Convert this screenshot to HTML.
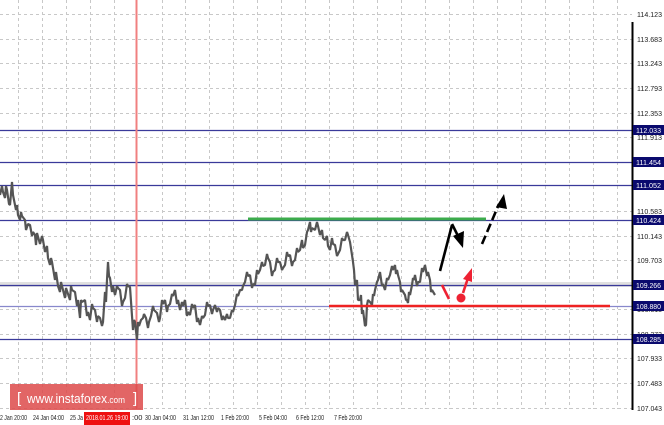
<!DOCTYPE html>
<html><head><meta charset="utf-8"><style>
html,body{margin:0;padding:0;background:#fff;width:664px;height:425px;overflow:hidden;font-family:"Liberation Sans",sans-serif}
</style></head><body>
<svg width="664" height="425" viewBox="0 0 664 425" xmlns="http://www.w3.org/2000/svg" font-family="Liberation Sans, sans-serif">
<rect width="664" height="425" fill="#fff"/>
<g stroke="#c8c8c8" stroke-width="1" stroke-dasharray="3,3">
<line x1="0" y1="14.5" x2="632" y2="14.5"/><line x1="0" y1="39.5" x2="632" y2="39.5"/><line x1="0" y1="63.5" x2="632" y2="63.5"/><line x1="0" y1="88.5" x2="632" y2="88.5"/><line x1="0" y1="113.5" x2="632" y2="113.5"/><line x1="0" y1="137.5" x2="632" y2="137.5"/><line x1="0" y1="211.5" x2="632" y2="211.5"/><line x1="0" y1="236.5" x2="632" y2="236.5"/><line x1="0" y1="260.5" x2="632" y2="260.5"/><line x1="0" y1="309.5" x2="632" y2="309.5"/><line x1="0" y1="334.5" x2="632" y2="334.5"/><line x1="0" y1="358.5" x2="632" y2="358.5"/><line x1="0" y1="383.5" x2="632" y2="383.5"/><line x1="0" y1="408.5" x2="632" y2="408.5"/>
<line x1="18.5" y1="0" x2="18.5" y2="409"/><line x1="42.5" y1="0" x2="42.5" y2="409"/><line x1="66.5" y1="0" x2="66.5" y2="409"/><line x1="90.5" y1="0" x2="90.5" y2="409"/><line x1="114.5" y1="0" x2="114.5" y2="409"/><line x1="162.5" y1="0" x2="162.5" y2="409"/><line x1="185.5" y1="0" x2="185.5" y2="409"/><line x1="209.5" y1="0" x2="209.5" y2="409"/><line x1="233.5" y1="0" x2="233.5" y2="409"/><line x1="257.5" y1="0" x2="257.5" y2="409"/><line x1="281.5" y1="0" x2="281.5" y2="409"/><line x1="305.5" y1="0" x2="305.5" y2="409"/><line x1="329.5" y1="0" x2="329.5" y2="409"/><line x1="353.5" y1="0" x2="353.5" y2="409"/><line x1="377.5" y1="0" x2="377.5" y2="409"/><line x1="401.5" y1="0" x2="401.5" y2="409"/><line x1="425.5" y1="0" x2="425.5" y2="409"/><line x1="449.5" y1="0" x2="449.5" y2="409"/><line x1="473.5" y1="0" x2="473.5" y2="409"/><line x1="497.5" y1="0" x2="497.5" y2="409"/><line x1="521.5" y1="0" x2="521.5" y2="409"/><line x1="545.5" y1="0" x2="545.5" y2="409"/><line x1="569.5" y1="0" x2="569.5" y2="409"/><line x1="593.5" y1="0" x2="593.5" y2="409"/><line x1="617.5" y1="0" x2="617.5" y2="409"/>
</g>
<rect x="0" y="282" width="632" height="5" fill="#e0e0e0"/>
<g stroke="#3a3a9a" stroke-width="1.3">
<line x1="0" y1="130.5" x2="632" y2="130.5"/><line x1="0" y1="162.5" x2="632" y2="162.5"/><line x1="0" y1="185.5" x2="632" y2="185.5"/><line x1="0" y1="220.5" x2="632" y2="220.5"/><line x1="0" y1="285.5" x2="632" y2="285.5"/><line x1="0" y1="306.5" x2="632" y2="306.5" stroke="#8888cc"/><line x1="0" y1="339.5" x2="632" y2="339.5"/>
</g>
<line x1="136.5" y1="0" x2="136.5" y2="409" stroke="#f08080" stroke-width="2"/>
<polyline fill="none" stroke="#555" stroke-width="2.2" stroke-linejoin="bevel" points="0,195 2,186 3,192 5,198 6,186 7,190 9,204 10,205 12,182 13,195 14,200 16,210 17,205 18,215 20,220 21,212 22,216 25,220 26,230 28,224 30,225 32,236 33,232 35,235 36,245 37,233 40,244 42,236 43,240 45,252 47,246 48,258 50,265 51,258 52,262 55,280 56,272 58,286 60,292 61,282 62,286 65,298 66,288 68,294 70,300 71,286 72,290 75,292 77,306 78,300 80,318 81,300 82,302 85,300 87,316 88,312 90,320 92,304 93,308 95,310 97,322 98,316 100,318 102,326 103,322 105,292 106,302 107,280 108,262 109,276 110,278 112,292 113,286 115,295 117,286 118,288 120,290 122,306 123,302 125,298 127,284 128,286 130,287 132,316 133,330 134,320 135,322 137,340 138,322 139,326 141,320 143,318 144,314 146,318 148,328 149,322 151,316 153,306 154,310 157,313 159,322 160,318 162,300 163,304 165,300 167,312 168,306 170,304 172,294 173,296 175,290 177,304 178,300 180,310 182,302 183,306 185,300 187,316 188,312 190,315 192,304 193,308 195,305 197,322 198,318 200,325 202,316 203,318 205,315 207,302 208,306 210,305 212,314 213,310 215,305 217,312 218,308 220,310 222,320 223,316 225,320 227,314 228,318 230,318 232,310 233,312 235,305 237,294 238,296 240,290 242,290 243,286 245,282 247,272 248,276 250,275 252,288 253,284 255,285 257,270 258,274 260,270 262,262 263,266 265,265 267,254 268,258 270,262 272,276 273,272 275,270 277,258 278,262 280,262 282,270 283,268 285,265 287,252 288,256 290,255 292,266 293,262 295,260 297,248 298,252 300,250 302,240 303,248 305,245 307,232 308,230 310,222 311,232 312,228 315,230 317,222 318,226 320,235 322,230 323,238 325,240 327,236 328,246 330,250 332,238 333,244 335,245 337,256 338,254 340,250 342,238 343,240 345,240 347,232 348,235 350,242 352,255 353,262 354,270 355,285 357,280 358,300 360,300 361,295 362,314 363,310 365,326 366,325 367,305 368,300 370,302 372,305 373,294 374,296 375,290 377,282 378,280 380,272 382,286 383,284 385,290 387,278 388,280 390,275 392,266 393,270 395,265 396,274 397,270 398,275 400,282 401,292 402,290 405,295 406,300 407,300 408,303 409,292 410,295 412,285 413,278 414,280 415,275 417,286 418,282 420,282 422,268 423,272 425,265 427,276 428,272 430,280 431,292 432,290 435,295"/>
<line x1="248" y1="219" x2="486" y2="219" stroke="#3cab4c" stroke-width="3"/>
<line x1="329" y1="306" x2="610" y2="306" stroke="#ee2222" stroke-width="2.5"/>
<g stroke="#000" stroke-width="2.6" fill="#000">
<line x1="440" y1="271" x2="452" y2="225"/>
<line x1="452" y1="224" x2="459" y2="238"/>
<polygon points="463,248 453,236 464,231" stroke="none"/>
<line x1="482" y1="244" x2="499" y2="204" stroke-dasharray="9,4"/>
<polygon points="504,194 496,207 507,209" stroke="none"/>
</g>
<g stroke="#ee2233" stroke-width="2.6" fill="#ee2233">
<line x1="442" y1="285" x2="449" y2="299"/>
<circle cx="461" cy="298" r="4.5" stroke="none"/>
<line x1="463" y1="293" x2="468" y2="278"/>
<polygon points="472,268 463,279 472,282" stroke="none"/>
</g>
<line x1="632.5" y1="22" x2="632.5" y2="410" stroke="#000" stroke-width="2"/>
<g font-size="7.5" fill="#222">
<text x="637" y="17" textLength="25" lengthAdjust="spacingAndGlyphs">114.123</text><text x="637" y="42" textLength="25" lengthAdjust="spacingAndGlyphs">113.683</text><text x="637" y="66" textLength="25" lengthAdjust="spacingAndGlyphs">113.243</text><text x="637" y="91" textLength="25" lengthAdjust="spacingAndGlyphs">112.793</text><text x="637" y="116" textLength="25" lengthAdjust="spacingAndGlyphs">112.353</text><text x="637" y="140" textLength="25" lengthAdjust="spacingAndGlyphs">111.913</text><text x="637" y="214" textLength="25" lengthAdjust="spacingAndGlyphs">110.583</text><text x="637" y="239" textLength="25" lengthAdjust="spacingAndGlyphs">110.143</text><text x="637" y="263" textLength="25" lengthAdjust="spacingAndGlyphs">109.703</text><text x="637" y="312" textLength="25" lengthAdjust="spacingAndGlyphs">108.813</text><text x="637" y="337" textLength="25" lengthAdjust="spacingAndGlyphs">108.373</text><text x="637" y="361" textLength="25" lengthAdjust="spacingAndGlyphs">107.933</text><text x="637" y="386" textLength="25" lengthAdjust="spacingAndGlyphs">107.483</text><text x="637" y="411" textLength="25" lengthAdjust="spacingAndGlyphs">107.043</text>
</g>
<g font-size="7.5" fill="#fff">
<rect x="633" y="125" width="31" height="10" fill="#0a0a6e"/><text x="636" y="133" textLength="25" lengthAdjust="spacingAndGlyphs">112.033</text>
<rect x="633" y="157" width="31" height="10" fill="#0a0a6e"/><text x="636" y="165" textLength="25" lengthAdjust="spacingAndGlyphs">111.454</text>
<rect x="633" y="180" width="31" height="10" fill="#0a0a6e"/><text x="636" y="188" textLength="25" lengthAdjust="spacingAndGlyphs">111.052</text>
<rect x="633" y="215" width="31" height="10" fill="#0a0a6e"/><text x="636" y="223" textLength="25" lengthAdjust="spacingAndGlyphs">110.424</text>
<rect x="633" y="280" width="31" height="10" fill="#0a0a6e"/><text x="636" y="288" textLength="25" lengthAdjust="spacingAndGlyphs">109.266</text>
<rect x="633" y="301" width="31" height="10" fill="#0a0a6e"/><text x="636" y="309" textLength="25" lengthAdjust="spacingAndGlyphs">108.880</text>
<rect x="633" y="334" width="31" height="10" fill="#0a0a6e"/><text x="636" y="342" textLength="25" lengthAdjust="spacingAndGlyphs">108.285</text>
</g>
<rect x="10" y="384" width="133" height="26" fill="#dd4a4a" opacity="0.85"/>
<text x="17" y="403" font-size="15" fill="#fff">[</text>
<text x="27" y="403" font-size="13" fill="#fff" textLength="98" lengthAdjust="spacingAndGlyphs">www.instaforex<tspan font-size="9">.com</tspan></text>
<text x="133" y="403" font-size="15" fill="#fff">]</text>
<g font-size="7.5" fill="#222">
<text x="0" y="420" textLength="27" lengthAdjust="spacingAndGlyphs">2 Jan 20:00</text><text x="33" y="420" textLength="31" lengthAdjust="spacingAndGlyphs">24 Jan 04:00</text><text x="70" y="420" textLength="13" lengthAdjust="spacingAndGlyphs">25 Ja</text>
<text x="145" y="420" textLength="31" lengthAdjust="spacingAndGlyphs">30 Jan 04:00</text><text x="183" y="420" textLength="31" lengthAdjust="spacingAndGlyphs">31 Jan 12:00</text><text x="221" y="420" textLength="28" lengthAdjust="spacingAndGlyphs">1 Feb 20:00</text><text x="259" y="420" textLength="28" lengthAdjust="spacingAndGlyphs">5 Feb 04:00</text><text x="296" y="420" textLength="28" lengthAdjust="spacingAndGlyphs">6 Feb 12:00</text><text x="334" y="420" textLength="28" lengthAdjust="spacingAndGlyphs">7 Feb 20:00</text>
</g>
<rect x="84" y="412" width="46" height="13" fill="#ee1111"/>
<text x="86" y="420" font-size="7.5" fill="#fff" textLength="42" lengthAdjust="spacingAndGlyphs">2018.01.26 19:00</text>
<text x="132" y="420" font-size="7.5" fill="#222">:00</text>
</svg>
</body></html>
